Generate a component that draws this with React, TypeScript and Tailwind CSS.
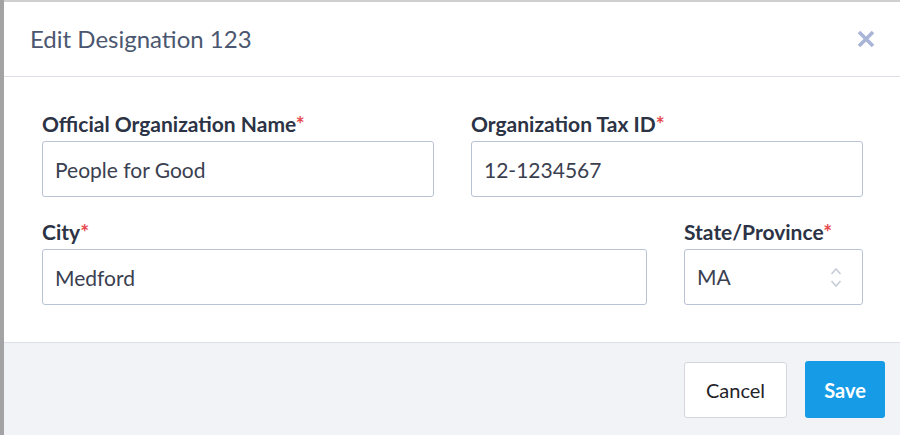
import React, { useState } from 'react';

const Label: React.FC<{ text: string }> = ({ text }) => (
  <label className="block text-[21px] leading-[24px] font-bold text-[#2c3345] mb-[5px]">
    {text}
    <span className="text-[#e5484d]">*</span>
  </label>
);

const inputCls =
  'w-full h-[56px] px-[12px] text-[21px] text-[#3a4050] bg-white border border-[#b9c3d6] rounded-[3px] outline-none';

const App: React.FC = () => {
  const [name, setName] = useState('People for Good');
  const [taxId, setTaxId] = useState('12-1234567');
  const [city, setCity] = useState('Medford');

  return (
    <div className="flex w-[900px] h-[435px] bg-[#9d9d9d] font-['Lato',sans-serif] overflow-hidden">
      <div className="w-[4px] shrink-0 bg-[#a3a3a3]" />
      <div className="flex-1 flex flex-col bg-white border-t-2 border-[#cfcfd2]">
        {/* header */}
        <div className="h-[75px] flex items-center justify-between pl-[26px] pr-[24px] border-b border-[#dcdfe6]">
          <h1 className="text-[24px] text-[#4b5770]">Edit Designation 123</h1>
          <button className="text-[#a9b5d6]">
            <svg width="20" height="20" viewBox="0 0 20 20">
              <path d="M3 3 L17 17 M17 3 L3 17" stroke="currentColor" strokeWidth="3.6" strokeLinecap="butt" />
            </svg>
          </button>
        </div>

        {/* body */}
        <div className="pt-[35px] pb-[37px] pl-[38px] pr-[37px] flex flex-col gap-[23px]">
          <div className="grid grid-cols-2 gap-[37px]">
            <div>
              <Label text="Official Organization Name" />
              <input className={inputCls} value={name} onChange={e => setName(e.target.value)} />
            </div>
            <div>
              <Label text="Organization Tax ID" />
              <input className={inputCls} value={taxId} onChange={e => setTaxId(e.target.value)} />
            </div>
          </div>
          <div className="grid grid-cols-[1fr_179px] gap-[37px]">
            <div>
              <Label text="City" />
              <input className={inputCls} value={city} onChange={e => setCity(e.target.value)} />
            </div>
            <div>
              <Label text="State/Province" />
              <div className="relative">
                <div className={inputCls + ' flex items-center'}>MA</div>
                <svg
                  className="absolute right-[21px] top-[18px] text-[#c7ccd5]"
                  width="12"
                  height="21"
                  viewBox="0 0 12 21"
                  fill="none"
                >
                  <path d="M1.5 7 L6 2 L10.5 7 M1.5 14 L6 19 L10.5 14" stroke="currentColor" strokeWidth="1.6" />
                </svg>
              </div>
            </div>
          </div>
        </div>

        {/* footer */}
        <div className="flex-1 bg-[#f2f3f7] border-t border-[#dcdfe5] flex justify-end items-start gap-[18px] pt-[19px] pr-[15px]">
          <button className="h-[56px] w-[103px] bg-white border border-[#d3d6dc] rounded-[3px] text-[20px] text-[#1f2329]">
            Cancel
          </button>
          <button className="h-[57px] w-[80px] bg-[#169be6] rounded-[3px] text-[20px] font-bold text-white -mt-[1px]">
            Save
          </button>
        </div>
      </div>
    </div>
  );
};

export default App;
